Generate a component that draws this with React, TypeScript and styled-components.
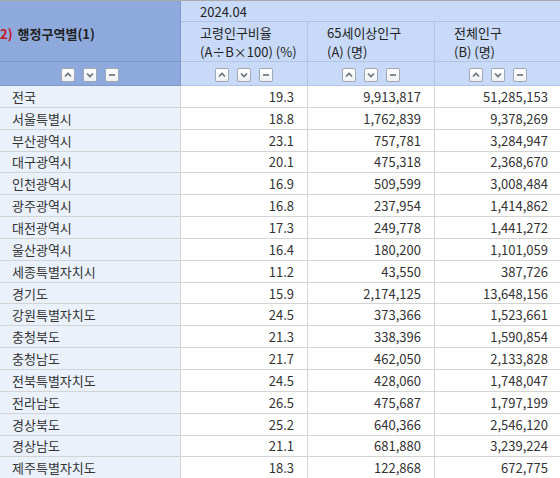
import React from "react";
import styled, { createGlobalStyle } from "styled-components";

const Global = createGlobalStyle`
  html, body { margin: 0; padding: 0; background: #fff; overflow: hidden; }
  body { font-family: "Noto Sans CJK KR", "Noto Sans", sans-serif; }
`;

const COLS = "181px 127px 127px 127px";

const Wrap = styled.div`
  width: 562px;
  border-top: 1px solid #a9a9a9;
  color: #222;
  font-size: 13px;
`;

const Head = styled.div`
  display: grid;
  grid-template-columns: ${COLS};
  grid-template-rows: 21px 40px 24px;
  background: #c9daf8;
`;

const HCell = styled.div<{ $dark?: boolean; $row: string; $col: string; $center?: boolean }>`
  grid-row: ${(p) => p.$row};
  grid-column: ${(p) => p.$col};
  background: ${(p) => (p.$dark ? "#8eaadc" : "#c9daf8")};
  border-bottom: 1px solid ${(p) => (p.$dark ? "#7f99c8" : "#b3c5e6")};
  border-right: 1px solid ${(p) => (p.$dark ? "#7f99c8" : "#b3c5e6")};
  display: flex;
  flex-direction: column;
  justify-content: center;
  align-items: ${(p) => (p.$center ? "center" : "flex-start")};
  padding-left: ${(p) => (p.$center ? 0 : 19)}px;
  padding-top: 1px;
  box-sizing: border-box;
  line-height: 19px;
  white-space: nowrap;
`;

const Line = styled.div`
  height: 19px;
  line-height: 19px;
`;

const MainLabel = styled.div`
  font-weight: bold;
  font-size: 13px;
  align-self: flex-start;
  margin-top: 3px;
`;

const Red = styled.span`
  color: #c8161d;
  margin-right: 5px;
`;

const Btns = styled.div`
  display: flex;
  gap: 8px;
  margin-top: 1px;
`;

const Btn = styled.div`
  width: 14px;
  height: 14px;
  box-sizing: border-box;
  border: 1px solid #a2a8b2;
  border-radius: 2px;
  background: linear-gradient(#ffffff, #eef0f3);
  display: flex;
  align-items: center;
  justify-content: center;
`;

const Row = styled.div`
  display: grid;
  grid-template-columns: ${COLS};
  height: 21.85px;
  box-sizing: border-box;
  border-bottom: 1px solid #d4d4d4;
`;

const NameCell = styled.div`
  background: #eaf1fb;
  border-right: 1px solid #d4d4d4;
  padding-left: 12px;
  display: flex;
  align-items: center;
  color: #333;
`;

const NumCell = styled.div`
  border-right: 1px solid #d4d4d4;
  padding-right: 13px;
  display: flex;
  align-items: center;
  justify-content: flex-end;
  color: #333;
`;

const Up = () => (
  <svg width="8" height="6" viewBox="0 0 8 6">
    <path d="M1 4.5 L4 1.5 L7 4.5" fill="none" stroke="#6b6f76" strokeWidth="1.6" />
  </svg>
);
const Down = () => (
  <svg width="8" height="6" viewBox="0 0 8 6">
    <path d="M1 1.5 L4 4.5 L7 1.5" fill="none" stroke="#6b6f76" strokeWidth="1.6" />
  </svg>
);
const Minus = () => (
  <svg width="8" height="6" viewBox="0 0 8 6">
    <path d="M1 3 L7 3" fill="none" stroke="#6b6f76" strokeWidth="1.6" />
  </svg>
);

const Buttons = () => (
  <Btns>
    <Btn><Up /></Btn>
    <Btn><Down /></Btn>
    <Btn><Minus /></Btn>
  </Btns>
);

const data: [string, string, string, string][] = [
  ["전국", "19.3", "9,913,817", "51,285,153"],
  ["서울특별시", "18.8", "1,762,839", "9,378,269"],
  ["부산광역시", "23.1", "757,781", "3,284,947"],
  ["대구광역시", "20.1", "475,318", "2,368,670"],
  ["인천광역시", "16.9", "509,599", "3,008,484"],
  ["광주광역시", "16.8", "237,954", "1,414,862"],
  ["대전광역시", "17.3", "249,778", "1,441,272"],
  ["울산광역시", "16.4", "180,200", "1,101,059"],
  ["세종특별자치시", "11.2", "43,550", "387,726"],
  ["경기도", "15.9", "2,174,125", "13,648,156"],
  ["강원특별자치도", "24.5", "373,366", "1,523,661"],
  ["충청북도", "21.3", "338,396", "1,590,854"],
  ["충청남도", "21.7", "462,050", "2,133,828"],
  ["전북특별자치도", "24.5", "428,060", "1,748,047"],
  ["전라남도", "26.5", "475,687", "1,797,199"],
  ["경상북도", "25.2", "640,366", "2,546,120"],
  ["경상남도", "21.1", "681,880", "3,239,224"],
  ["제주특별자치도", "18.3", "122,868", "672,775"],
];

export default function App() {
  return (
    <>
      <Global />
      <Wrap>
        <Head>
          <HCell $dark $row="1 / 3" $col="1" $center>
            <MainLabel>
              <Red>2)</Red>행정구역별(1)
            </MainLabel>
          </HCell>
          <HCell $row="1" $col="2 / 5">2024.04</HCell>
          <HCell $row="2" $col="2">
            <Line>고령인구비율</Line>
            <Line>(A÷B×100) (%)</Line>
          </HCell>
          <HCell $row="2" $col="3">
            <Line>65세이상인구</Line>
            <Line>(A) (명)</Line>
          </HCell>
          <HCell $row="2" $col="4">
            <Line>전체인구</Line>
            <Line>(B) (명)</Line>
          </HCell>
          <HCell $dark $row="3" $col="1" $center><Buttons /></HCell>
          <HCell $row="3" $col="2" $center><Buttons /></HCell>
          <HCell $row="3" $col="3" $center><Buttons /></HCell>
          <HCell $row="3" $col="4" $center><Buttons /></HCell>
        </Head>
        {data.map((r) => (
          <Row key={r[0]}>
            <NameCell>{r[0]}</NameCell>
            <NumCell>{r[1]}</NumCell>
            <NumCell>{r[2]}</NumCell>
            <NumCell>{r[3]}</NumCell>
          </Row>
        ))}
      </Wrap>
    </>
  );
}
